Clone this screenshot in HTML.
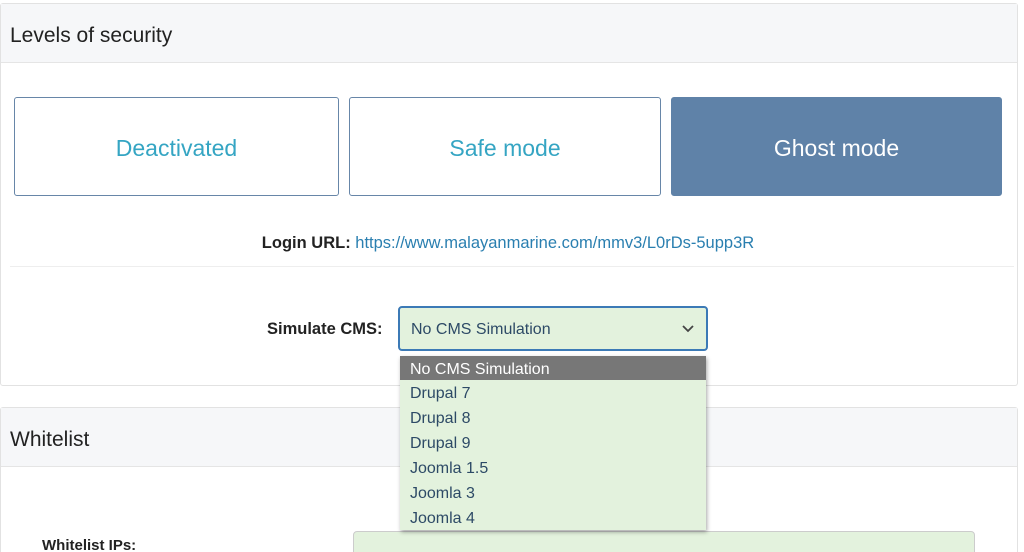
<!DOCTYPE html>
<html><head><style>
html,body{margin:0;width:1024px;height:552px;overflow:hidden;background:#fff;font-family:"Liberation Sans",sans-serif;position:relative}
.abs{position:absolute}
.card{position:absolute;left:0;width:1016px;border:1px solid #e2e2e2;border-radius:3px;background:#fff}
.hdr{background:#f6f7f9;border-bottom:1px solid #e5e5e5;height:58px;font-size:21px;color:#222;padding-left:9px;line-height:64px}
.btn{position:absolute;top:97px;height:97px;border:1px solid #6786a8;border-radius:3px;font-size:23px;color:#35a5c3;text-align:center;line-height:100px;box-sizing:border-box}
.opt{height:25px;line-height:27px;padding-left:10px;font-size:16px;color:#2d4a66}
</style></head><body>
<div class="card" style="top:3px;height:381px">
<div class="hdr">Levels of security</div>
</div>
<div class="btn" style="left:14px;width:325px;height:99px">Deactivated</div>
<div class="btn" style="left:349px;width:312px;height:99px">Safe mode</div>
<div class="btn" style="left:671px;width:331px;height:99px;background:#5f82a8;border-color:#5f82a8;color:#fff">Ghost mode</div>
<div class="abs" style="left:0;top:234px;width:1016px;text-align:center;font-size:16.5px;color:#222"><b>Login URL:</b> <span style="color:#2a7fb0">https://www.malayanmarine.com/mmv3/L0rDs-5upp3R</span></div>
<div class="abs" style="left:10px;right:10px;top:266px;border-top:1px solid #eee"></div>
<div class="abs" style="left:267px;top:320px;font-size:16.5px;font-weight:bold;color:#222">Simulate CMS:</div>
<div class="abs" style="left:398px;top:306px;height:41px;border:2px solid #3c7ab6;border-radius:4px;background:#e3f2dd;font-size:16px;color:#2d4a66;line-height:44px;padding-left:11px;width:295px">No CMS Simulation
<svg class="abs" style="right:12px;top:17px" width="12" height="8" viewBox="0 0 12 8"><path d="M1 1l5 5 5-5" fill="none" stroke="#444" stroke-width="1.8"/></svg></div>
<div class="card" style="top:407px;height:160px">
<div class="hdr">Whitelist</div>
</div>
<div class="abs" style="left:42px;top:537px;font-size:15px;font-weight:bold;color:#222">Whitelist IPs:</div>
<div class="abs" style="left:353px;top:531px;width:620px;height:40px;border:1px solid #ccc;border-radius:4px;background:#e3f2dd"></div>
<div class="abs" style="left:400px;top:356px;width:306px;height:174px;background:#e3f2dd;box-shadow:1px 2px 4px rgba(0,0,0,.35)">
<div class="opt" style="background:#777;color:#fff;height:24px;line-height:27px">No CMS Simulation</div>
<div class="opt">Drupal 7</div><div class="opt">Drupal 8</div><div class="opt">Drupal 9</div>
<div class="opt">Joomla 1.5</div><div class="opt">Joomla 3</div><div class="opt">Joomla 4</div>
</div>
</body></html>
